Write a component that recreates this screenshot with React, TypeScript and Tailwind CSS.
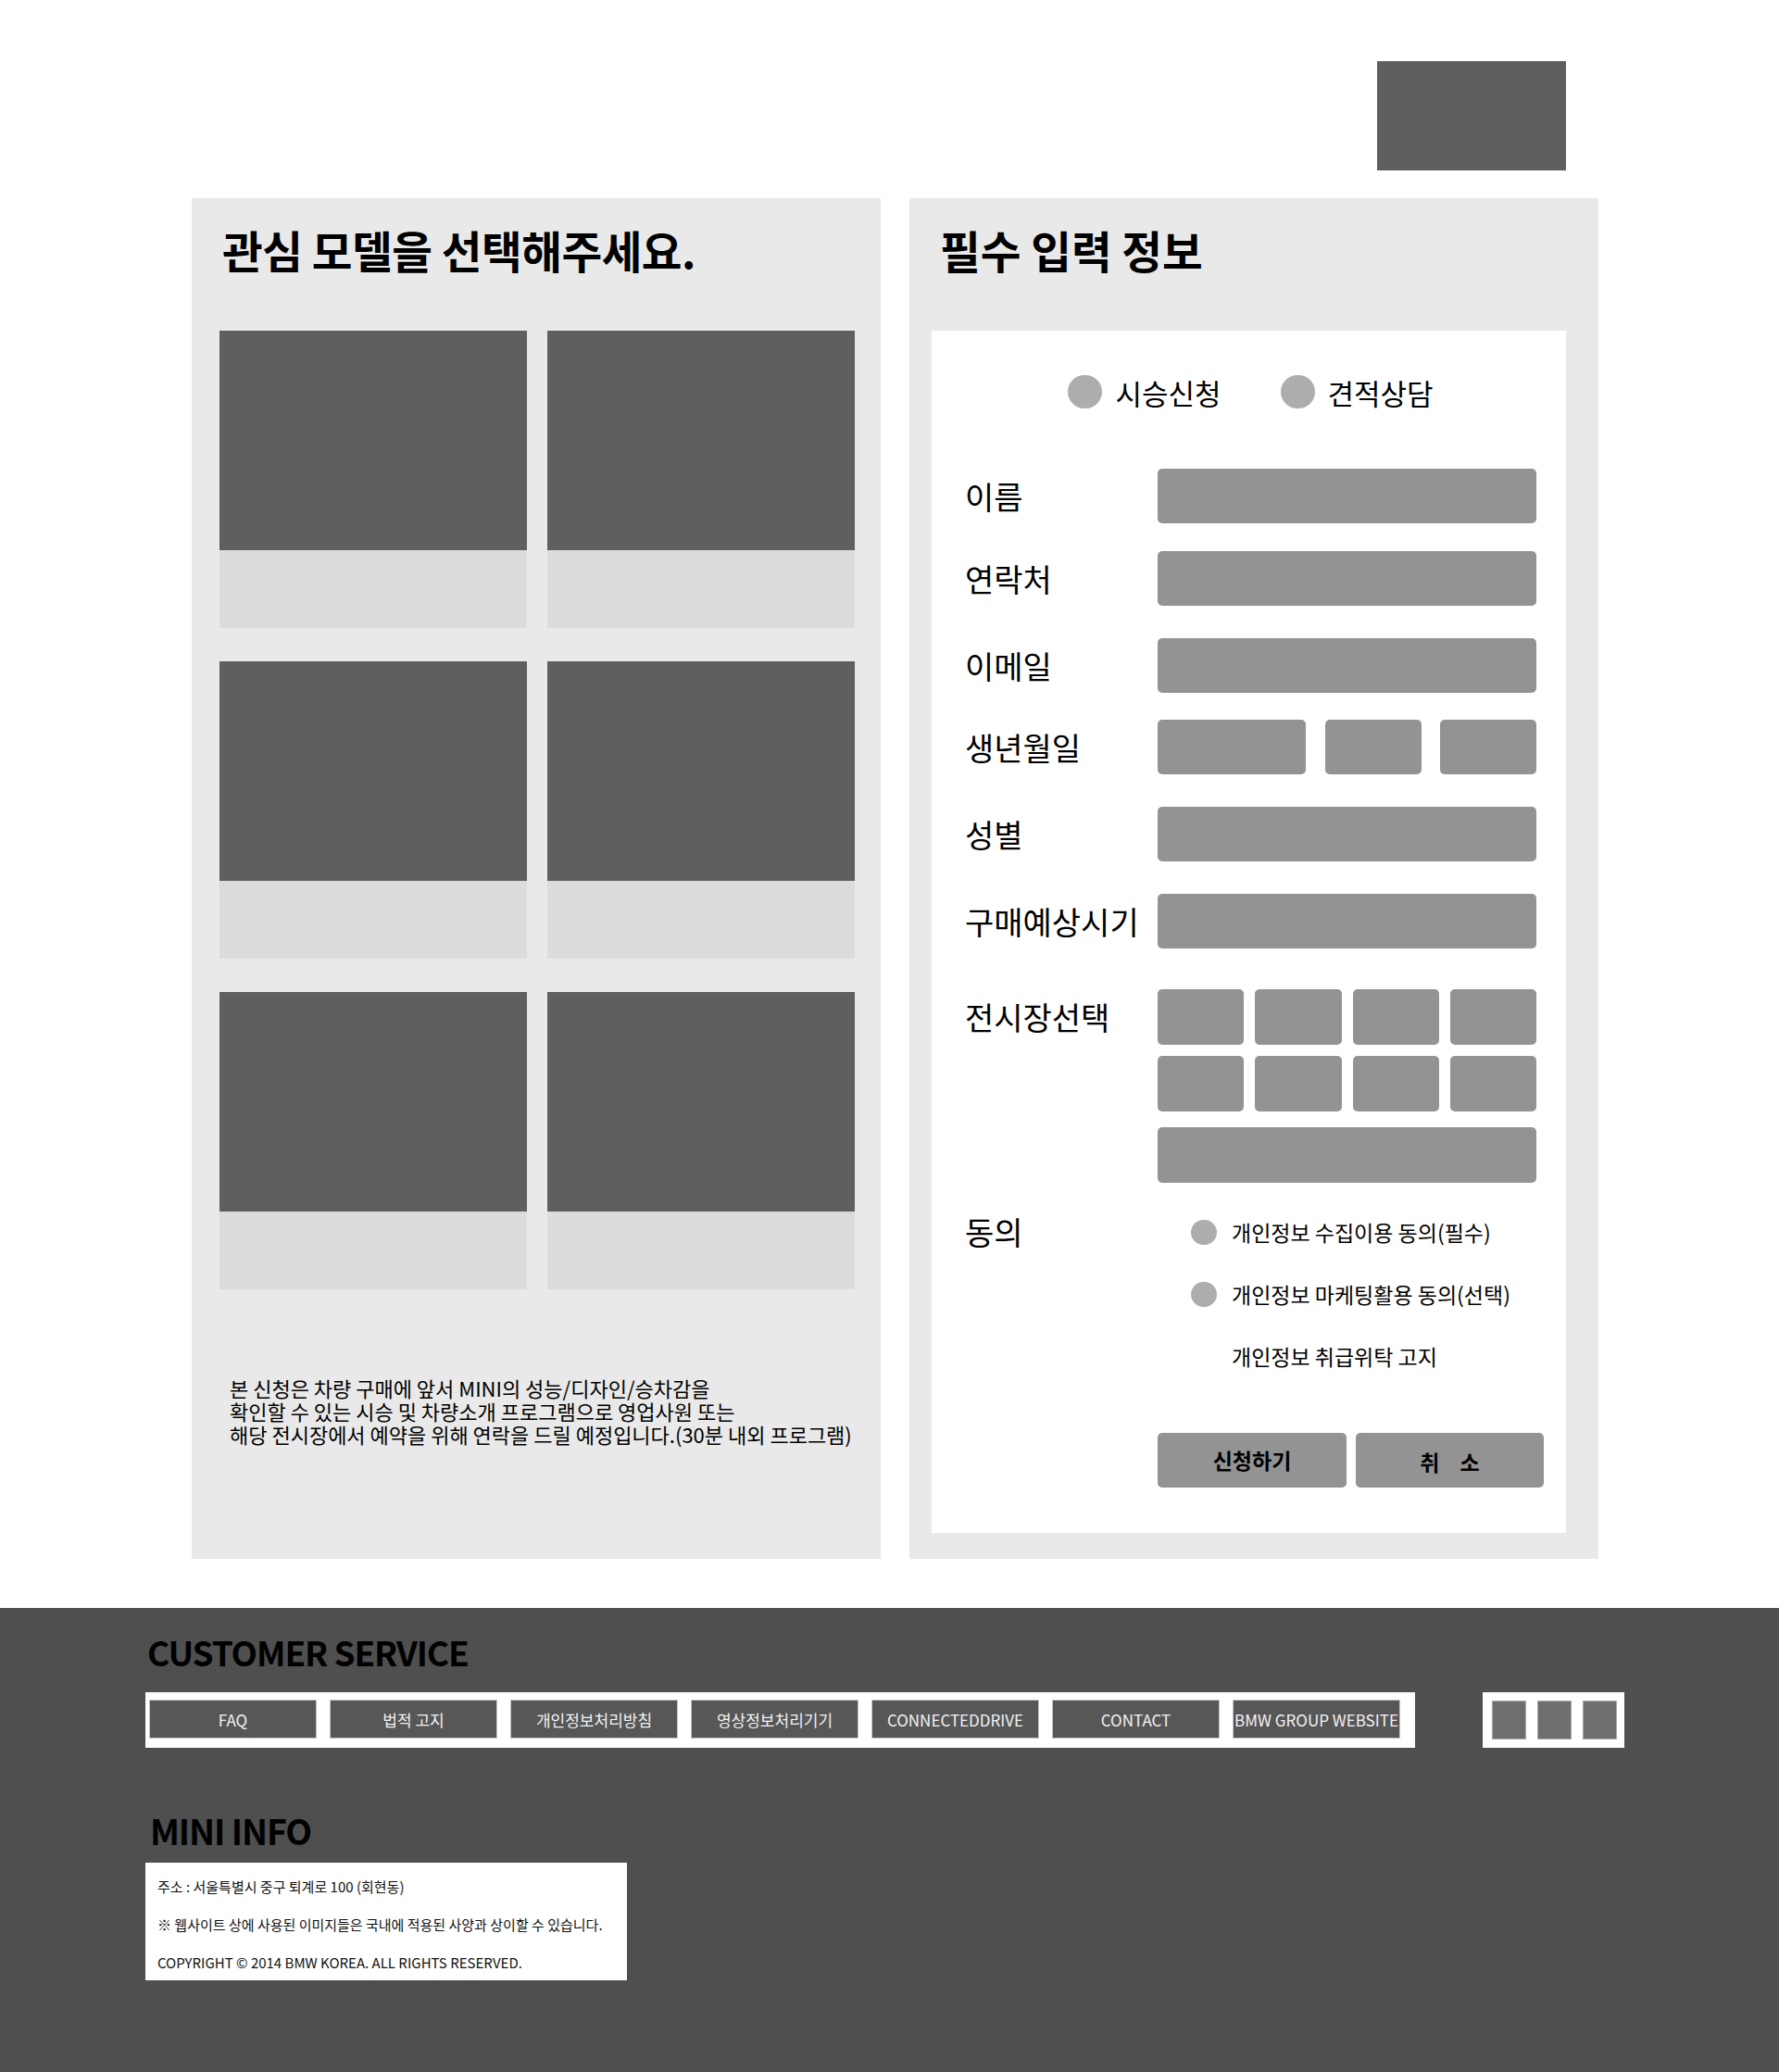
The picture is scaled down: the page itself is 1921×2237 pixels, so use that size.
import React from "react";

const FONT = "font-['Noto_Sans_CJK_KR','Noto_Sans',sans-serif]";

// 단일 입력 행 (라벨 + 회색 입력칸)
const ROWS = [
  { label: "이름", mt: "mt-0" },
  { label: "연락처", mt: "mt-[30px]" },
  { label: "이메일", mt: "mt-[35px]" },
  { label: "생년월일", mt: "mt-[29px]", birth: true },
  { label: "성별", mt: "mt-[35px]" },
  { label: "구매예상시기", mt: "mt-[35px]" },
];

const NAV = ["FAQ", "법적 고지", "개인정보처리방침", "영상정보처리기기", "CONNECTEDDRIVE", "CONTACT", "BMW GROUP WEBSITE"];

function ModelCard() {
  return (
    <div className="flex h-[321px] flex-col">
      <div className="h-[237px] bg-[#5f5f5f]" />
      <div className="flex-1 bg-[#dcdcdc]" />
    </div>
  );
}

function Dot({ size }: { size: "lg" | "sm" }) {
  return <span className={size === "lg" ? "h-[36px] w-[37px] shrink-0 rounded-full bg-[#adadad]" : "h-[27px] w-[28px] shrink-0 rounded-full bg-[#adadad]"} />;
}

export default function App() {
  return (
    <div className={`${FONT} w-[1921px] bg-white text-black`}>
      {/* header logo placeholder */}
      <div className="ml-[1487px] pt-[66px]">
        <div className="h-[118px] w-[204px] bg-[#5f5f5f]" />
      </div>

      <div className="ml-[207px] mt-[30px] flex items-stretch gap-[31px]">
        {/* 관심 모델 */}
        <section className="w-[744px] bg-[#e9e9e9]">
          <h2 className="pl-[33px] pt-[32px] text-[47.5px] font-bold leading-[48px] tracking-[-0.01em]">관심 모델을 선택해주세요.</h2>
          <div className="mt-[63px] grid grid-cols-2 gap-x-[22px] gap-y-[36px] pl-[30px] pr-[28px]">
            {Array.from({ length: 6 }).map((_, i) => (
              <ModelCard key={i} />
            ))}
          </div>
          <p className="mt-[94px] pl-[41px] text-[22px] leading-[25px]">
            본 신청은 차량 구매에 앞서 MINI의 성능/디자인/승차감을
            <br />
            확인할 수 있는 시승 및 차량소개 프로그램으로 영업사원 또는
            <br />
            해당 전시장에서 예약을 위해 연락을 드릴 예정입니다.(30분 내외 프로그램)
          </p>
        </section>

        {/* 필수 입력 정보 */}
        <section className="w-[744px] bg-[#e9e9e9] pb-[28px]">
          <h2 className="pl-[33px] pt-[32px] text-[47.5px] font-bold leading-[48px]">필수 입력 정보</h2>
          <div className="ml-[24px] mt-[63px] w-[685px] bg-white pb-[49px] pl-[36px] pr-[32px] pt-[48px]">
            <div className="flex items-center justify-center">
              <label className="flex items-center gap-[14px]">
                <Dot size="lg" />
                <span className="text-[31px] leading-none">시승신청</span>
              </label>
              <label className="ml-[64px] flex items-center gap-[14px]">
                <Dot size="lg" />
                <span className="text-[31px] leading-none">견적상담</span>
              </label>
            </div>

            <div className="mt-[65px]">
              {ROWS.map((row) => (
                <div key={row.label} className={`${row.mt} flex items-center`}>
                  <span className="w-[208px] shrink-0 whitespace-nowrap text-[34px] leading-none">{row.label}</span>
                  {row.birth ? (
                    <div className="flex w-[410px] justify-between">
                      <div className="h-[59px] w-[160px] rounded-[5px] bg-[#939393]" />
                      <div className="h-[59px] w-[104px] rounded-[5px] bg-[#939393]" />
                      <div className="h-[59px] w-[104px] rounded-[5px] bg-[#939393]" />
                    </div>
                  ) : (
                    <div className="h-[59px] w-[409px] rounded-[5px] bg-[#939393]" />
                  )}
                </div>
              ))}

              {/* 전시장선택 */}
              <div className="mt-[44px] flex items-start">
                <span className="flex h-[60px] w-[208px] shrink-0 items-center text-[34px] leading-none">전시장선택</span>
                <div className="w-[409px]">
                  <div className="grid grid-cols-4 gap-x-[12px] gap-y-[12px]">
                    {Array.from({ length: 8 }).map((_, i) => (
                      <div key={i} className="h-[60px] rounded-[5px] bg-[#939393]" />
                    ))}
                  </div>
                  <div className="mt-[17px] h-[60px] rounded-[5px] bg-[#939393]" />
                </div>
              </div>

              {/* 동의 */}
              <div className="mt-[33px] flex items-start">
                <span className="flex h-[40px] w-[208px] shrink-0 items-center text-[34px] leading-none">동의</span>
                <div className="flex flex-col gap-[27px] pl-[36px]">
                  <div className="flex h-[40px] items-center gap-[16px]">
                    <Dot size="sm" />
                    <span className="whitespace-nowrap text-[23px] leading-none">개인정보 수집이용 동의(필수)</span>
                  </div>
                  <div className="flex h-[40px] items-center gap-[16px]">
                    <Dot size="sm" />
                    <span className="whitespace-nowrap text-[23px] leading-none">개인정보 마케팅활용 동의(선택)</span>
                  </div>
                  <div className="flex h-[40px] items-center pl-[44px]">
                    <span className="whitespace-nowrap text-[23px] leading-none">개인정보 취급위탁 고지</span>
                  </div>
                </div>
              </div>

              <div className="ml-[208px] mt-[63px] flex gap-[10px]">
                <button className="flex h-[59px] w-[204px] shrink-0 items-center justify-center rounded-[5px] bg-[#939393] text-[23px] font-bold leading-none">
                  신청하기
                </button>
                <button className="flex h-[59px] w-[203px] shrink-0 items-center justify-center gap-[22px] rounded-[5px] bg-[#939393] pt-[4px] text-[23px] font-bold leading-none">
                  <span>취</span>
                  <span>소</span>
                </button>
              </div>
            </div>
          </div>
        </section>
      </div>

      {/* footer */}
      <footer className="mt-[53px] h-[501px] bg-[#4f4f4f] pl-[157px] pt-[29px]">
        <h3 className="pl-[2px] text-[37px] font-bold leading-none tracking-[-0.03em] text-black">CUSTOMER SERVICE</h3>
        <div className="mt-[25px] flex items-center">
          <nav className="flex h-[60px] w-[1371px] gap-[14px] bg-white pb-[10px] pl-[4px] pt-[8px]">
            {NAV.map((item) => (
              <a key={item} className="flex w-[181px] items-center justify-center border border-[#c4c4c4] bg-[#575757] text-[17px] leading-none text-[#f2f2f2]">
                {item}
              </a>
            ))}
          </nav>
          <div className="ml-[73px] flex h-[60px] w-[153px] gap-[12px] bg-white pb-[9px] pl-[10px] pt-[9px]">
            <span className="w-[37px] border border-[#a8a8a8] bg-[#6f6f6f]" />
            <span className="w-[37px] border border-[#a8a8a8] bg-[#6f6f6f]" />
            <span className="w-[37px] border border-[#a8a8a8] bg-[#6f6f6f]" />
          </div>
        </div>

        <h3 className="mt-[70px] pl-[5px] text-[37.5px] font-bold leading-none tracking-[-0.03em] text-black">MINI INFO</h3>
        <div className="mt-[16px] flex h-[127px] w-[520px] flex-col gap-[21px] bg-white pl-[13px] pt-[16px] text-[15px] leading-[20px] text-[#111]">
          <p>주소 : 서울특별시 중구 퇴계로 100 (회현동)</p>
          <p>※ 웹사이트 상에 사용된 이미지들은 국내에 적용된 사양과 상이할 수 있습니다.</p>
          <p>COPYRIGHT © 2014 BMW KOREA. ALL RIGHTS RESERVED.</p>
        </div>
      </footer>
    </div>
  );
}
